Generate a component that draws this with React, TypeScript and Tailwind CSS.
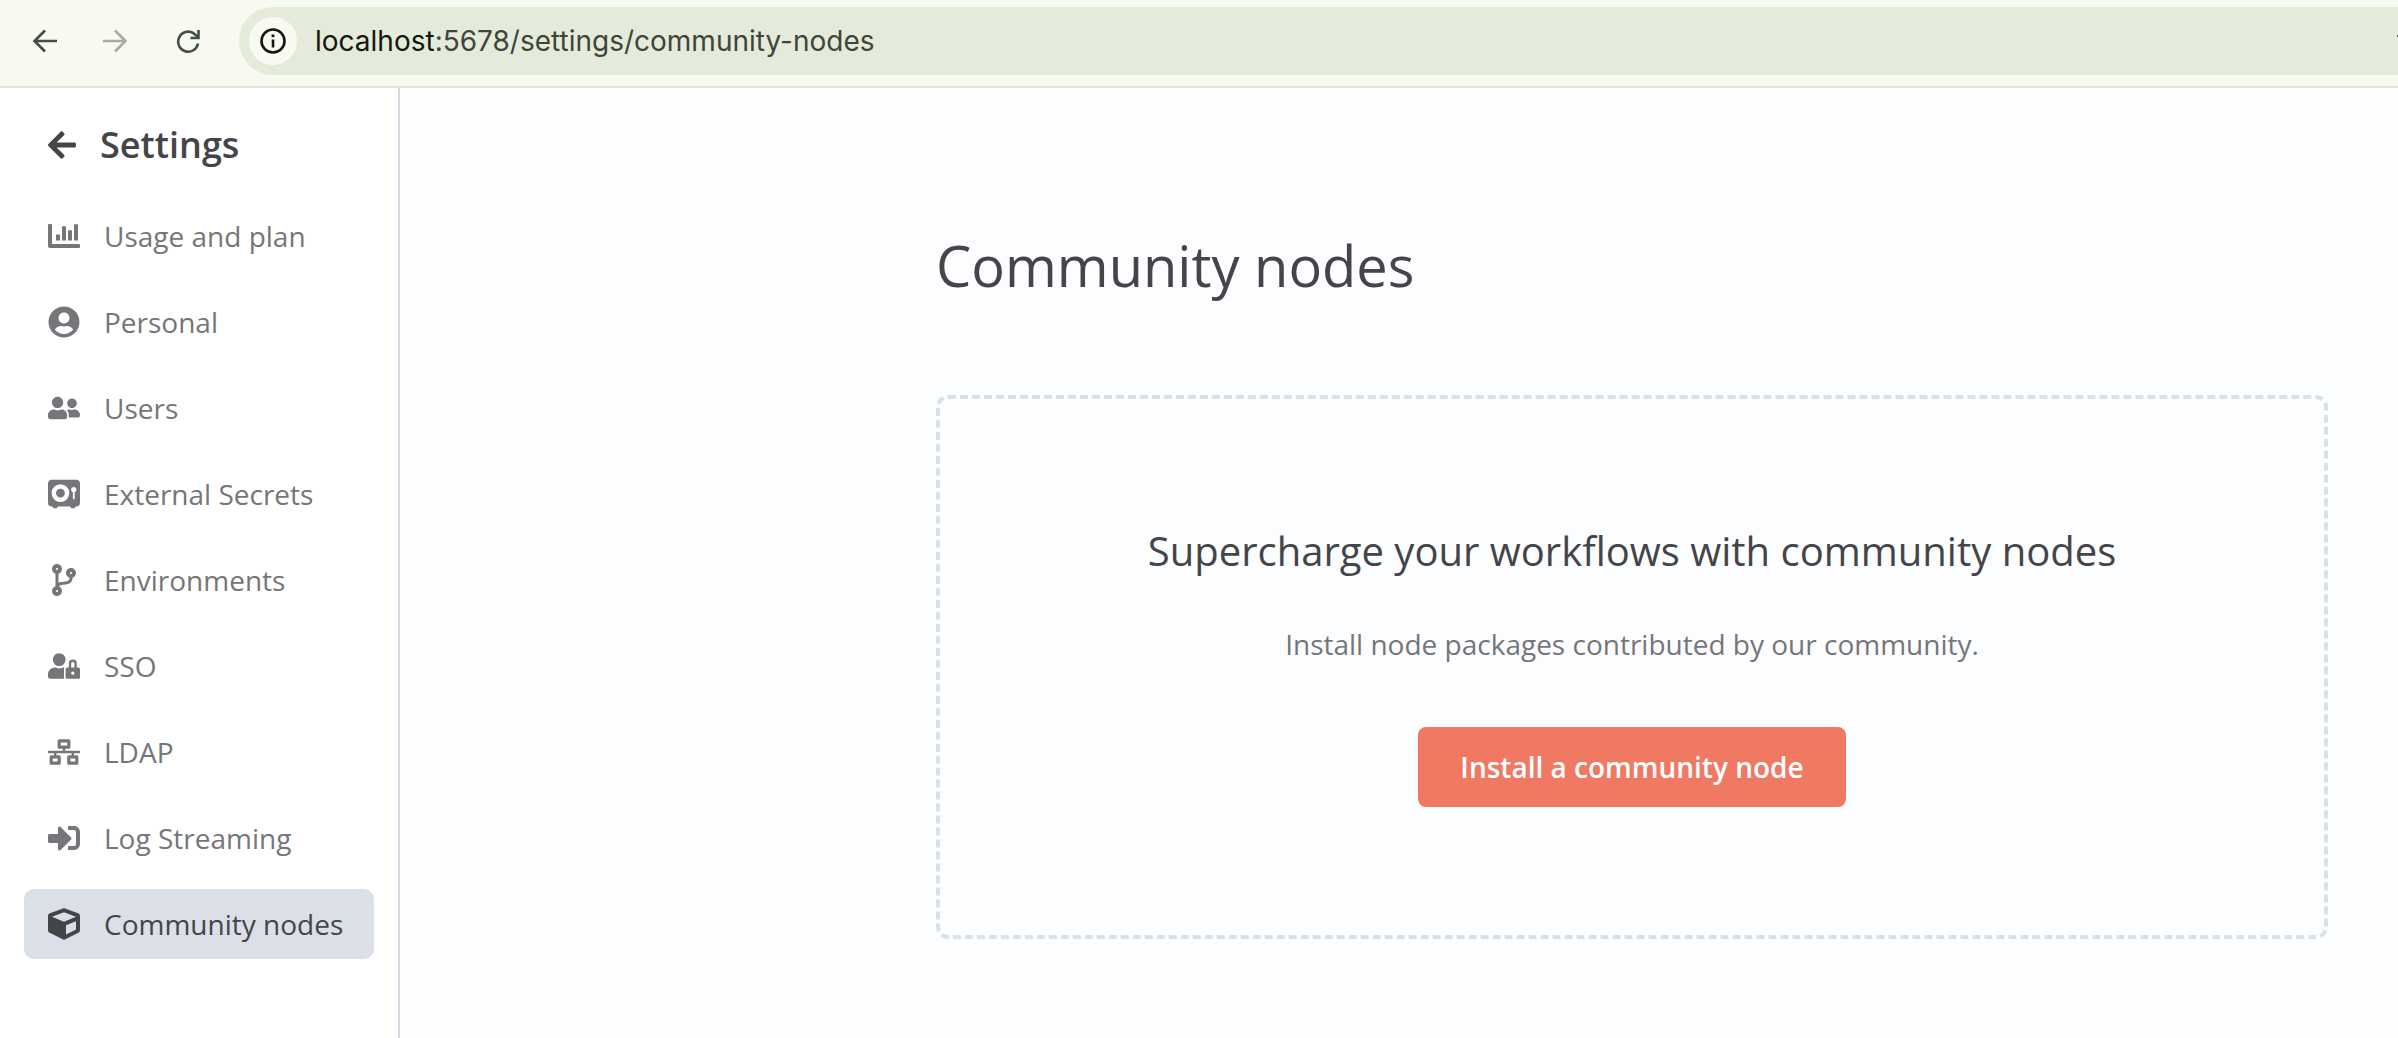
import React from 'react';
import { FaArrowLeft, FaUserCircle, FaUserFriends, FaCodeBranch, FaUserLock, FaNetworkWired, FaSignInAlt, FaCube } from 'react-icons/fa';
import { FaVault } from 'react-icons/fa6';

const UsageIcon: React.FC<{ className?: string }> = ({ className }) => (
  <svg viewBox="0 0 32 24" className={className} fill="currentColor">
    <path d="M0 1a1 1 0 0 1 1-1h2a1 1 0 0 1 1 1v19h27a1 1 0 0 1 1 1v2a1 1 0 0 1-1 1H2a2 2 0 0 1-2-2z" />
    <rect x="8" y="10.5" width="4" height="6" rx="0.5" />
    <rect x="14" y="2.3" width="4" height="14.2" rx="0.5" />
    <rect x="20" y="6.3" width="4" height="10.2" rx="0.5" />
    <rect x="26" y="0.3" width="4" height="16.2" rx="0.5" />
  </svg>
);

const NAV_ITEMS = [
  { label: 'Usage and plan', icon: UsageIcon, iconClass: 'w-[32px] h-[24px]' },
  { label: 'Personal', icon: FaUserCircle, iconClass: 'w-[32px] h-[32px]' },
  { label: 'Users', icon: FaUserFriends, iconClass: 'w-[32px] h-[32px]' },
  { label: 'External Secrets', icon: FaVault, iconClass: 'w-[32px] h-[32px]' },
  { label: 'Environments', icon: FaCodeBranch, iconClass: 'w-[32px] h-[32px]' },
  { label: 'SSO', icon: FaUserLock, iconClass: 'w-[32px] h-[32px]' },
  { label: 'LDAP', icon: FaNetworkWired, iconClass: 'w-[32px] h-[32px]' },
  { label: 'Log Streaming', icon: FaSignInAlt, iconClass: 'w-[32px] h-[32px]' },
  { label: 'Community nodes', icon: FaCube, iconClass: 'w-[32px] h-[32px]', active: true },
];

const BrowserBar: React.FC = () => (
  <div className="h-[88px] shrink-0 flex items-center bg-[#f8f9f1] border-b-2 border-[#e2e5da] pl-[32px] pb-[4px]">
    <svg viewBox="0 0 25 24" className="w-[25px] h-[24px] text-[#42503e]" fill="none" stroke="currentColor" strokeWidth="2.6">
      <path d="M25 12H3M13 1.5 2.5 12 13 22.5" />
    </svg>
    <svg viewBox="0 0 25 24" className="w-[25px] h-[24px] ml-[46px] text-[#a9aca4]" fill="none" stroke="currentColor" strokeWidth="2.6">
      <path d="M0 12h22M12 1.5 22.5 12 12 22.5" />
    </svg>
    <svg viewBox="0 0 25 25" className="w-[25px] h-[25px] ml-[48px] text-[#42503e]" fill="none" stroke="currentColor" strokeWidth="2.6">
      <path d="M22 14.5A10 10 0 1 1 17.5 4.2L22 8" />
      <path d="M22.5 1v8h-8" />
    </svg>
    <div className="ml-[38px] flex-1 h-[68px] bg-[#e5ebdb] rounded-l-[34px] flex items-center pl-[10px]">
      <div className="w-[48px] h-[48px] rounded-full bg-[#f8f9f1] flex items-center justify-center">
        <svg viewBox="0 0 26 26" className="w-[26px] h-[26px] text-[#15170f]" fill="none" stroke="currentColor">
          <circle cx="13" cy="13" r="11.5" strokeWidth="2.6" />
          <path d="M13 11.5v8" strokeWidth="2.6" />
          <path d="M13 6.5v2.6" strokeWidth="2.8" />
        </svg>
      </div>
      <div className="ml-[18px] text-[28px] text-[#3f453a] font-['Inter',sans-serif]">
        <span className="text-[#15170f]">localhost</span>:5678/settings/community-nodes
      </div>
      <div className="ml-auto mb-[10px] w-[1px] h-[2px] bg-[#555a50]" />
    </div>
  </div>
);

const Sidebar: React.FC = () => (
  <aside className="w-[400px] shrink-0 bg-white border-r-2 border-[#d5dae8] flex flex-col pl-[24px] pr-[24px]">
    <div className="h-[113px] flex items-center pl-[24px] text-[#444549]">
      <FaArrowLeft className="w-[32px] h-[32px] -ml-[2px]" />
      <span className="ml-[22px] text-[36px] font-semibold">Settings</span>
    </div>
    <nav className="flex flex-col gap-[16px]">
      {NAV_ITEMS.map(item => (
        <div
          key={item.label}
          className={`h-[70px] rounded-[10px] flex items-center pl-[24px] ${item.active ? 'bg-[#dbdfe7] text-[#444549]' : 'text-[#747679]'}`}
        >
          <item.icon className={item.iconClass} />
          <span className="ml-[24px] text-[28px]">{item.label}</span>
        </div>
      ))}
    </nav>
  </aside>
);

const App: React.FC = () => (
  <div className="w-full h-[1038px] overflow-hidden flex flex-col font-['Open_Sans',sans-serif]">
    <BrowserBar />
    <div className="flex-1 flex min-h-0">
      <Sidebar />
      <main className="flex-1 bg-[#fcfdfe] pl-[536px]">
        <h1 className="mt-[137px] text-[56px] leading-[80px] text-[#444549]">Community nodes</h1>
        <div className="mt-[90px] w-[1392px] h-[544px] border-[4px] border-dashed border-[#dbdfe8] rounded-[12px] flex flex-col items-center">
          <h2 className="mt-[125px] text-[40px] leading-[54px] text-[#444549]">Supercharge your workflows with community nodes</h2>
          <p className="mt-[46px] text-[28px] leading-[40px] text-[#747679]">Install node packages contributed by our community.</p>
          <button className="mt-[63px] w-[428px] h-[80px] rounded-[8px] bg-[#f07964] text-white text-[28px] font-semibold">Install a community node</button>
        </div>
      </main>
    </div>
  </div>
);

export default App;
